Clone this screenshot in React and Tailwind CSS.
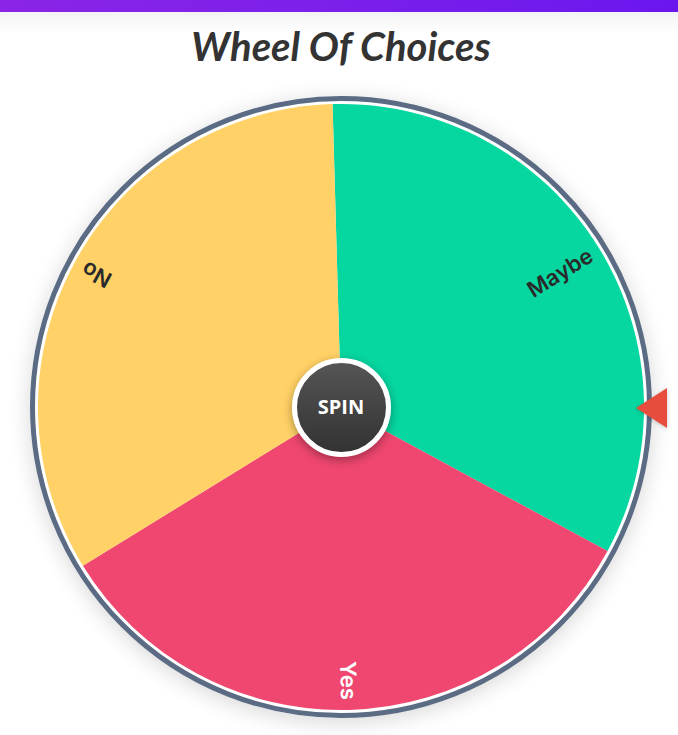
import React from "react";

const C = 311;
const R = 303;

const segments = [
  { label: "Maybe", from: -1.6, to: 118.4, fill: "#06d6a0", text: "#2a2a2a" },
  { label: "Yes", from: 118.4, to: 238.4, fill: "#ef476f", text: "#ffffff" },
  { label: "No", from: 238.4, to: 358.4, fill: "#ffd166", text: "#2a2a2a" },
];

function pt(deg, r) {
  const a = (deg * Math.PI) / 180;
  return [C + r * Math.sin(a), C - r * Math.cos(a)];
}

function slice(from, to) {
  const [x0, y0] = pt(from, R);
  const [x1, y1] = pt(to, R);
  const large = to - from > 180 ? 1 : 0;
  return `M ${C} ${C} L ${x0} ${y0} A ${R} ${R} 0 ${large} 1 ${x1} ${y1} Z`;
}

function Wheel() {
  return (
    <svg viewBox="0 0 622 622" className="w-full h-full">
      <circle cx={C} cy={C} r={308.5} fill="#ffffff" stroke="#5b6b84" strokeWidth="5" />
      {segments.map((s) => (
        <path key={s.label} d={slice(s.from, s.to)} fill={s.fill} />
      ))}
      {segments.map((s) => {
        const mid = (s.from + s.to) / 2;
        return (
          <g key={s.label + "-t"} transform={`rotate(${mid - 90} ${C} ${C})`}>
            <text
              x={C + 293}
              y={C}
              textAnchor="end"
              dominantBaseline="central"
              fill={s.text}
              style={{ fontFamily: "Inter, 'Open Sans', sans-serif", fontWeight: 600, fontSize: 22 }}
            >
              {s.label}
            </text>
          </g>
        );
      })}
    </svg>
  );
}

export default function App() {
  return (
    <div className="min-h-screen bg-white overflow-hidden">
      <div className="h-3 bg-linear-to-r from-[#8b24e6] to-[#6b16ef]" />
      <div className="h-[84px] pt-[10px] bg-linear-to-b from-[#f3f3f3] to-white to-25%">
        <h1 className="text-center pl-1 text-[40px] leading-[48px] font-bold italic text-[#333]" style={{ fontFamily: "Lato, 'Open Sans', sans-serif" }}>
          Wheel Of Choices
        </h1>
      </div>
      <div className="relative ml-[30px] w-[622px] h-[622px]">
        <div className="absolute inset-0 rounded-full shadow-[0_4px_22px_rgba(0,0,0,0.16)]" />
        <div className="relative w-full h-full">
          <Wheel />
        </div>
        <div className="absolute inset-0 flex items-center justify-center pointer-events-none">
          <button
            className="pointer-events-auto w-[99px] h-[99px] rounded-full border-[5px] border-white bg-linear-to-b from-[#555555] to-[#333333] shadow-[0_3px_10px_rgba(0,0,0,0.35)] flex items-center justify-center text-white text-[20px] font-bold"
            style={{ fontFamily: "'Open Sans', sans-serif" }}
          >
            SPIN
          </button>
        </div>
        <svg
          className="absolute left-[606px] top-[292px] w-[31px] h-[40px] drop-shadow-[0_1px_2px_rgba(0,0,0,0.2)]"
          viewBox="0 0 31 40"
        >
          <polygon points="0,20 31,0 31,40" fill="#e74c3c" />
        </svg>
      </div>
    </div>
  );
}
